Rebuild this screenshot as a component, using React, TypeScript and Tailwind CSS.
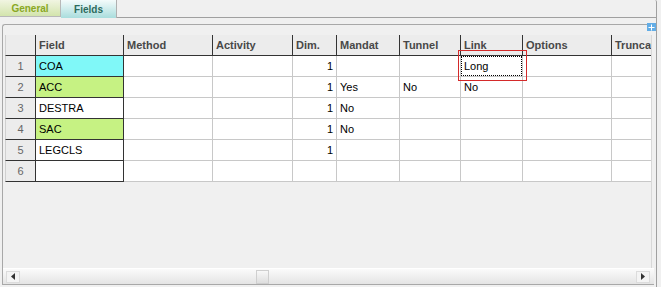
const columns = [
  { key: "num", label: "", w: "w-[31px]" },
  { key: "field", label: "Field", w: "w-[88px]" },
  { key: "method", label: "Method", w: "w-[89px]" },
  { key: "activity", label: "Activity", w: "w-[80px]" },
  { key: "dim", label: "Dim.", w: "w-[44px]" },
  { key: "mandat", label: "Mandat", w: "w-[63px]" },
  { key: "tunnel", label: "Tunnel", w: "w-[61px]" },
  { key: "link", label: "Link", w: "w-[62px]" },
  { key: "options", label: "Options", w: "w-[89px]" },
  { key: "trunca", label: "Truncate", w: "w-[80px]" },
];

type Row = {
  field: string;
  fieldBg: string;
  dim: string;
  mandat: string;
  tunnel: string;
  link: string;
};

const rows: Row[] = [
  { field: "COA", fieldBg: "bg-[#80f8f8]", dim: "1", mandat: "", tunnel: "", link: "Long" },
  { field: "ACC", fieldBg: "bg-[#c6f283]", dim: "1", mandat: "Yes", tunnel: "No", link: "No" },
  { field: "DESTRA", fieldBg: "bg-white", dim: "1", mandat: "No", tunnel: "", link: "" },
  { field: "SAC", fieldBg: "bg-[#c6f283]", dim: "1", mandat: "No", tunnel: "", link: "" },
  { field: "LEGCLS", fieldBg: "bg-white", dim: "1", mandat: "", tunnel: "", link: "" },
  { field: "", fieldBg: "bg-white", dim: "", mandat: "", tunnel: "", link: "" },
];

function Arrow({ dir }: { dir: "left" | "right" }) {
  return (
    <div className="flex h-[12px] w-[14px] items-center justify-center border border-[#dcdcdc] bg-[#f4f4f4]">
      <svg width="4" height="7" viewBox="0 0 4 7">
        {dir === "left" ? (
          <path d="M4 0 L0 3.5 L4 7 Z" fill="#333" />
        ) : (
          <path d="M0 0 L4 3.5 L0 7 Z" fill="#333" />
        )}
      </svg>
    </div>
  );
}

export default function App() {
  return (
    <div className="relative flex h-[287px] w-[661px] flex-col overflow-hidden bg-[#f0f0f0] font-['Liberation_Sans',Arial,sans-serif] text-[11px] text-black">
      {/* tabs */}
      <div className="flex h-[18px] w-[657px]">
        <div className="flex h-[17px] w-[61px] items-center justify-center border-r border-b border-[#b8b8b8] bg-gradient-to-b from-[#f1f5e2] to-[#d3e4ac] text-[10px] font-bold text-[#8aa823]">
          General
        </div>
        <div className="flex h-[18px] w-[56px] items-center justify-center border-r border-[#b0b0b0] bg-gradient-to-b from-[#f4fbfb] to-[#a9dddd] text-[10px] font-bold text-[#2c6b5d]">
          Fields
        </div>
        <div className="flex-1 rounded-tr-[2px] border-r border-b border-[#a0a0a0]" />
      </div>

      {/* body */}
      <div className="flex flex-1 w-[657px] flex-col border-r border-[#a0a0a0] pt-[6px] pb-[2px] pl-[2px] pr-[2px]">
        <div className="flex flex-1 flex-col rounded-tl-[3px] border-l border-t border-b border-[#a8a8a8] pt-[10px]">
          <div className="relative ml-[2px] mr-[2px] flex-1 overflow-hidden border-r border-[#d8d8d8]">
            {/* header */}
            <div className="flex w-[800px]">
              {columns.map((c) => (
                <div
                  key={c.key}
                  className={`${c.w} flex h-[21px] shrink-0 items-center border-r border-b border-[#333] bg-[#ececec] pl-[3px] font-bold text-[#484848] ${
                    c.key === "num" ? "border-l border-l-[#d0d0d0]" : ""
                  }`}
                >
                  {c.label}
                </div>
              ))}
            </div>
            {rows.map((r, i) => (
              <div key={i} className="flex w-[800px]">
                <div className="flex h-[21px] w-[31px] shrink-0 items-center justify-center border-l border-l-[#d0d0d0] border-r border-b border-[#333] bg-[#ececec] text-[#666]">
                  {i + 1}
                </div>
                <div className={`flex h-[21px] w-[88px] shrink-0 items-center border-r border-b border-[#333] pl-[3px] ${r.fieldBg}`}>
                  {r.field}
                </div>
                <div className="h-[21px] w-[89px] shrink-0 border-r border-b border-[#c8c8c8] bg-white" />
                <div className="h-[21px] w-[80px] shrink-0 border-r border-b border-[#c8c8c8] bg-white" />
                <div className="flex h-[21px] w-[44px] shrink-0 items-center justify-end border-r border-b border-[#c8c8c8] bg-white pr-[3px]">
                  {r.dim}
                </div>
                <div className="flex h-[21px] w-[63px] shrink-0 items-center border-r border-b border-[#c8c8c8] bg-white pl-[3px]">
                  {r.mandat}
                </div>
                <div className="flex h-[21px] w-[61px] shrink-0 items-center border-r border-b border-[#c8c8c8] bg-white pl-[3px]">
                  {r.tunnel}
                </div>
                <div className="flex h-[21px] w-[62px] shrink-0 items-center border-r border-b border-[#c8c8c8] bg-white">
                  {i === 0 ? (
                    <div className="flex h-[20px] w-[61px] items-center border border-dotted border-black pl-[2px]">
                      {r.link}
                    </div>
                  ) : (
                    <span className="pl-[3px]">{r.link}</span>
                  )}
                </div>
                <div className="h-[21px] w-[89px] shrink-0 border-r border-b border-[#c8c8c8] bg-white" />
                <div className="h-[21px] w-[80px] shrink-0 border-r border-b border-[#c8c8c8] bg-white" />
              </div>
            ))}
          </div>

          {/* horizontal scrollbar */}
          <div className="relative flex h-[16px] items-center justify-between border-t border-white bg-gradient-to-b from-[#fbfbfb] to-[#e4e4e4] pl-[3px] pr-[4px]">
            <Arrow dir="left" />
            <div className="absolute left-[253px] top-[1px] h-[14px] w-[13px] border border-[#cfcfcf] bg-gradient-to-b from-[#f8f8f8] to-[#dedede]" />
            <Arrow dir="right" />
          </div>
        </div>
      </div>

      {/* expand icon */}
      <div className="absolute left-[647px] top-[23px] flex h-[8px] w-[9px] items-center justify-center bg-[#62ade6]">
        <svg width="7" height="7" viewBox="0 0 7 7">
          <path d="M3 0.5h1v6h-1z M0.5 3h6v1h-6z" fill="#fff" />
        </svg>
      </div>

      {/* highlight */}
      <div className="absolute left-[458px] top-[50px] h-[31px] w-[69px] border border-[#d42a2a]" />
    </div>
  );
}
